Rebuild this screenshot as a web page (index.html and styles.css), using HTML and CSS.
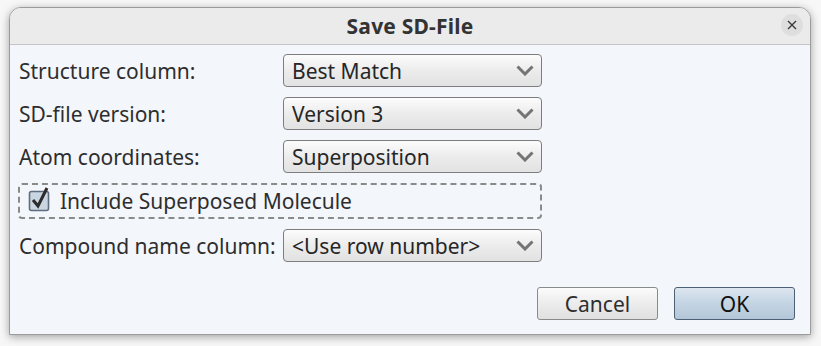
FILE: index.html
```html
<!DOCTYPE html>
<html>
<head>
<meta charset="utf-8">
<link rel="stylesheet" href="styles.css">
</head>
<body>
<div class="window">
  <div class="titlebar">
    <span class="title">Save SD-File</span>
    <span class="close"><svg width="10" height="10" viewBox="0 0 10 10"><path d="M1 1 L9 9 M9 1 L1 9" stroke="#3a3a3a" stroke-width="1.4" fill="none"/></svg></span>
  </div>
  <div class="content">
    <div class="row">
      <span class="label fixed">Structure column:</span>
      <div class="combo"><span>Best Match</span><svg class="chev" width="18" height="11" viewBox="0 0 18 11"><path d="M1.5 1.5 L9 9 L16.5 1.5" stroke="#747474" stroke-width="3" fill="none"/></svg></div>
    </div>
    <div class="row">
      <span class="label fixed">SD-file version:</span>
      <div class="combo"><span>Version 3</span><svg class="chev" width="18" height="11" viewBox="0 0 18 11"><path d="M1.5 1.5 L9 9 L16.5 1.5" stroke="#747474" stroke-width="3" fill="none"/></svg></div>
    </div>
    <div class="row">
      <span class="label fixed">Atom coordinates:</span>
      <div class="combo"><span>Superposition</span><svg class="chev" width="18" height="11" viewBox="0 0 18 11"><path d="M1.5 1.5 L9 9 L16.5 1.5" stroke="#747474" stroke-width="3" fill="none"/></svg></div>
    </div>
    <div class="checkrow">
      <span class="checkbox"><svg width="24" height="27" viewBox="0 0 24 27"><rect x="1.5" y="6.5" width="19" height="19" rx="2" fill="#c9d5e1" stroke="#5f6e7c" stroke-width="1.6"/><path d="M5 15 L10 21 L19 3" stroke="#2b2b2b" stroke-width="3" fill="none" stroke-linejoin="miter"/></svg></span>
      <span class="label">Include Superposed Molecule</span>
    </div>
    <div class="row">
      <span class="label fixed">Compound name column:</span>
      <div class="combo"><span>&lt;Use row number&gt;</span><svg class="chev" width="18" height="11" viewBox="0 0 18 11"><path d="M1.5 1.5 L9 9 L16.5 1.5" stroke="#747474" stroke-width="3" fill="none"/></svg></div>
    </div>
    <div class="buttons">
      <button class="btn">Cancel</button>
      <button class="btn ok">OK</button>
    </div>
  </div>
</div>
</body>
</html>
```
FILE: styles.css
```css
html, body {
  margin: 0;
  padding: 0;
}
body {
  width: 821px;
  height: 346px;
  background: #f7f7f7;
  font-family: "Noto Sans", "DejaVu Sans", sans-serif;
  overflow: hidden;
}
.window {
  margin: 7px 0 0 9px;
  width: 802px;
  height: 328px;
  box-sizing: border-box;
  border: 1px solid #9c9c9c;
  border-radius: 12px 12px 0 0;
  background: #f3f6fb;
  box-shadow: 0 2px 9px rgba(0,0,0,0.35);
  overflow: hidden;
  display: flex;
  flex-direction: column;
}
.titlebar {
  height: 36px;
  background: #ebebeb;
  border-bottom: 1px solid #c4c4c4;
  display: flex;
  align-items: center;
  justify-content: center;
  position: relative;
  flex: none;
}
.title {
  font-weight: bold;
  font-size: 21px;
  color: #333333;
  letter-spacing: 0.2px;
}
.close {
  position: absolute;
  right: 7px;
  top: 6px;
  width: 22px;
  height: 22px;
  border-radius: 50%;
  background: #dedede;
  display: flex;
  align-items: center;
  justify-content: center;
}
.content {
  padding: 9px 8px 0 8px;
  display: flex;
  flex-direction: column;
  gap: 10px;
}
.row {
  display: flex;
  align-items: center;
  height: 33px;
}
.label {
  font-size: 21px;
  color: #2e2e2e;
  padding-left: 1px;
  white-space: nowrap;
}
.fixed {
  width: 264px;
  flex: none;
}
.combo {
  width: 259px;
  height: 33px;
  box-sizing: border-box;
  border: 1.5px solid #7d7d7d;
  border-radius: 4px;
  background: linear-gradient(#fcfcfc, #ececec 50%, #e2e2e2);
  display: flex;
  align-items: center;
  justify-content: space-between;
  padding: 0 7px 0 8px;
  font-size: 21px;
  color: #262626;
}
.chev {
  flex: none;
}
.checkrow {
  height: 36px;
  width: 524px;
  box-sizing: border-box;
  border: 2px dashed #8a8a8a;
  border-radius: 4px;
  display: flex;
  align-items: center;
  padding-left: 8px;
  gap: 7px;
}
.checkbox {
  display: flex;
  margin-top: -6px;
}
.buttons {
  display: flex;
  justify-content: flex-end;
  gap: 16px;
  margin-top: 15px;
  padding-right: 7px;
}
.btn {
  width: 121px;
  height: 33px;
  box-sizing: border-box;
  border: 1.5px solid #8a8a8a;
  border-radius: 3px;
  background: linear-gradient(#fbfbfb, #ececec 50%, #e0e0e0);
  font-family: "Noto Sans", "DejaVu Sans", sans-serif;
  font-size: 21px;
  color: #2e2e2e;
  padding: 0;
}
.btn.ok {
  border-color: #4d6075;
  background: linear-gradient(#dce6f0, #c4d4e3 50%, #b3c6d8);
  color: #111;
}
```
